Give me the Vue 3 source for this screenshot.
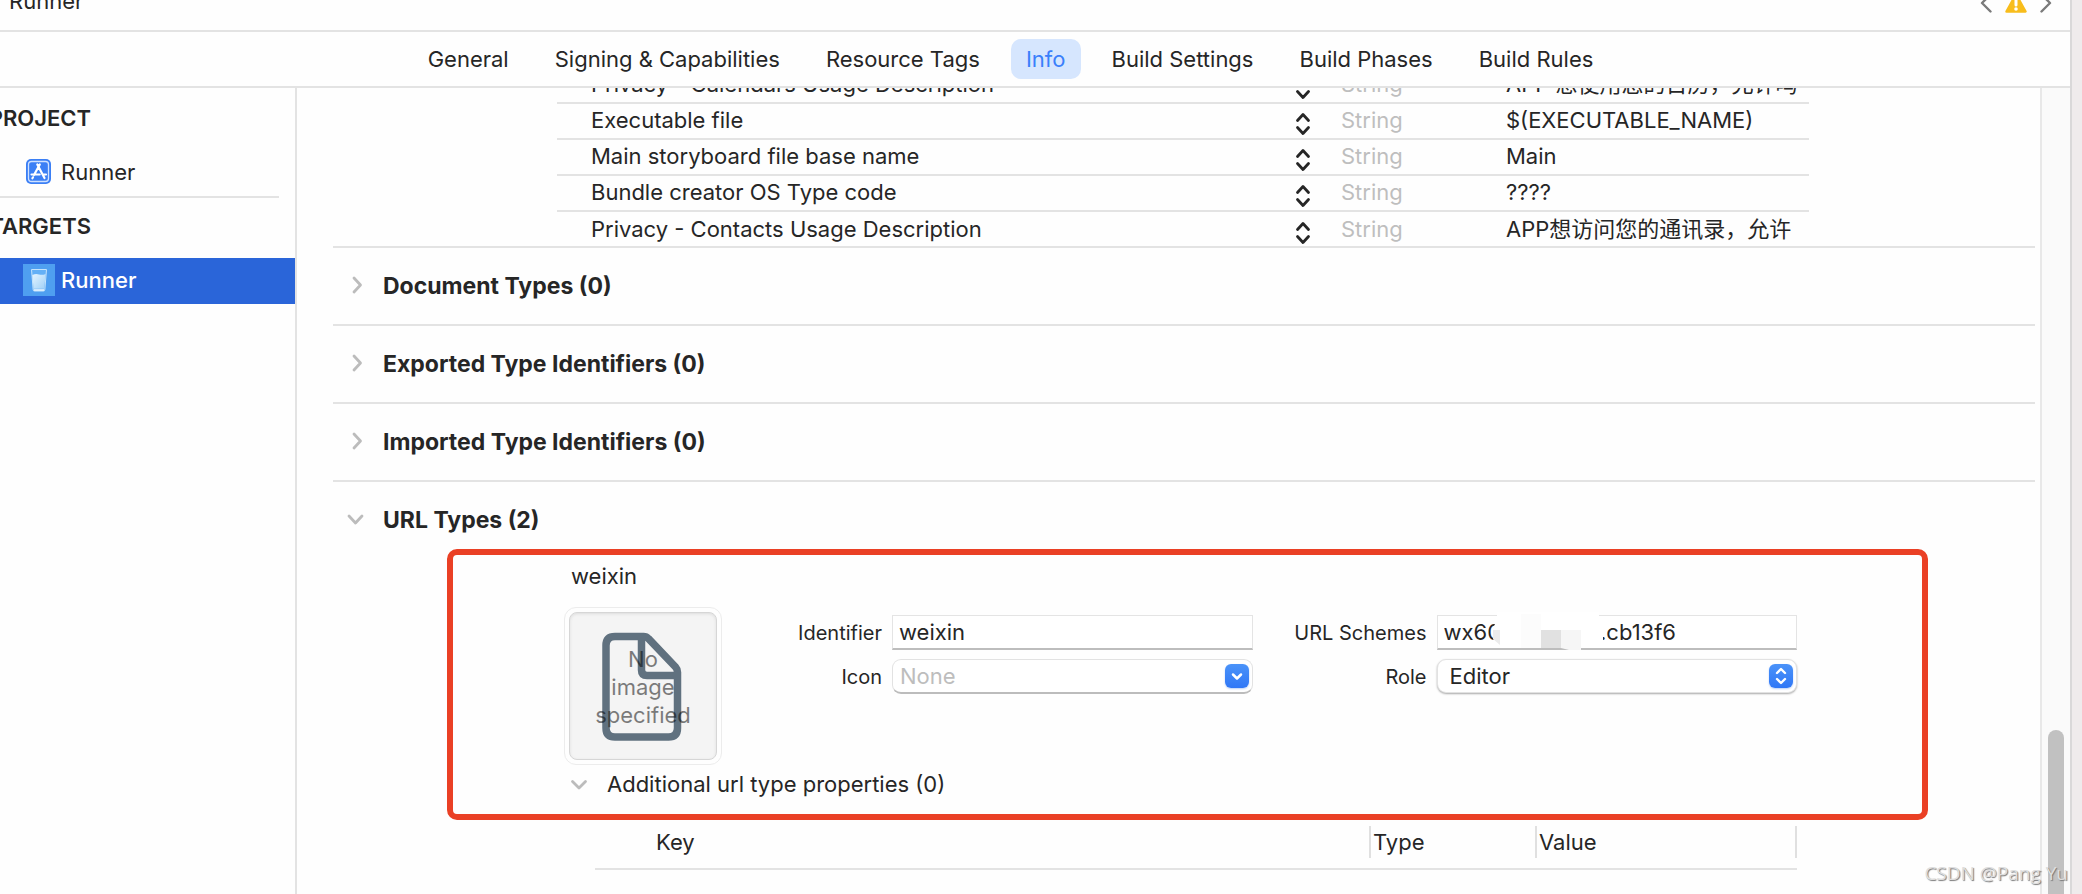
<script setup>
import { ref } from 'vue'

const tabs = ['General', 'Signing & Capabilities', 'Resource Tags', 'Info', 'Build Settings', 'Build Phases', 'Build Rules']
const activeTab = ref('Info')

const rows = [
  { key: 'Privacy - Calendars Usage Description', type: 'String', value: 'APP 想使用您的日历，允许吗' },
  { key: 'Executable file', type: 'String', value: '$(EXECUTABLE_NAME)' },
  { key: 'Main storyboard file base name', type: 'String', value: 'Main' },
  { key: 'Bundle creator OS Type code', type: 'String', value: '????' },
  { key: 'Privacy - Contacts Usage Description', type: 'String', value: 'APP想访问您的通讯录，允许' },
]

const sections = ['Document Types (0)', 'Exported Type Identifiers (0)', 'Imported Type Identifiers (0)']

const identifier = ref('weixin')
const icon = ref('')
const scheme = ref('wx60' + '\u00a0'.repeat(16) + '.cb13f6')
const role = ref('Editor')
</script>

<template>
  <div class="window">
    <div class="editor">
      <header class="jumpbar">
        <span class="crumb">Runner</span>
        <div class="issues">
          <button class="plain" aria-label="Previous issue">
            <svg width="12" height="20" viewBox="0 0 12 20"><path d="M10.500 1.500L2 10l8.500 8.500" fill="none" stroke="#7b7b7b" stroke-width="2.400" stroke-linecap="round" stroke-linejoin="round" /></svg>
          </button>
          <svg class="warning" width="22" height="20" viewBox="0 0 22 20">
            <path d="M11 1.500L20.500 18.500H1.500z" fill="#f8bd1c" stroke="#f8bd1c" stroke-width="2.500" stroke-linejoin="round" />
            <path d="M11 5v7" stroke="#fff" stroke-width="3" stroke-linecap="round" />
            <circle cx="11" cy="16" r="1.800" fill="#fff" />
          </svg>
          <button class="plain" aria-label="Next issue">
            <svg width="12" height="20" viewBox="0 0 12 20"><path d="M1.500 1.500L10 10l-8.500 8.500" fill="none" stroke="#7b7b7b" stroke-width="2.400" stroke-linecap="round" stroke-linejoin="round" /></svg>
          </button>
        </div>
      </header>

      <nav class="tabs">
        <button v-for="t in tabs" :key="t" class="tab" :class="{ active: t === activeTab }" @click="activeTab = t">{{ t }}</button>
      </nav>

      <div class="body">
        <aside class="sidebar">
          <h2 class="group">PROJECT</h2>
          <a class="item" href="#project">
            <svg class="glyph" width="32" height="32" viewBox="0 0 32 32">
              <rect x="3" y="3" width="25" height="25" rx="5" fill="#3b7ff5" />
              <rect x="5.500" y="5.500" width="20" height="20" rx="3" fill="none" stroke="#cfe1ff" stroke-width="1.300" />
              <path d="M14.300 8.500L21.500 22M16.800 8.500L11 19M8.500 18.500h8.200M19.500 18.500H23M10 21.300l-.6 1" stroke="#fff" stroke-width="2.200" stroke-linecap="round" fill="none" />
            </svg>
            Runner
          </a>
          <div class="divider"></div>
          <h2 class="group">TARGETS</h2>
          <a class="item selected" href="#target">
            <svg class="glyph" width="32" height="32" viewBox="0 0 32 32">
              <defs>
                <linearGradient id="water" x1="0" y1="0" x2="1" y2="1">
                  <stop offset="0" stop-color="#e4f4ff" /><stop offset="1" stop-color="#9fd0f7" />
                </linearGradient>
              </defs>
              <rect width="32" height="32" fill="#4f9ff0" />
              <path d="M8.500 5.500h15l-1.700 20.500q-.1 1-1.200 1h-9.200q-1.100 0-1.200-1z" fill="#64b0f6" stroke="#c5e3fb" stroke-width="1" />
              <path d="M9.300 11q3.500-1.700 6.700-.6t6.600-.4l-1.300 14.800h-10.700z" fill="url(#water)" />
              <path d="M11 26h10" stroke="#f3faff" stroke-width="1.500" />
            </svg>
            Runner
          </a>
        </aside>

        <main class="content">
          <div class="plist">
            <table>
              <colgroup><col /><col class="c-step" /><col class="c-type" /><col class="c-value" /></colgroup>
              <tbody>
                <tr v-for="r in rows" :key="r.key">
                  <td class="key">{{ r.key }}</td>
                  <td class="step">
                    <button class="plain" :aria-label="'Change ' + r.key">
                      <svg width="16" height="24" viewBox="0 0 16 24"><path d="M2.500 8.500L8 2.500l5.500 6M2.500 15.500l5.500 6 5.500-6" fill="none" stroke="#262626" stroke-width="2.800" stroke-linecap="round" stroke-linejoin="round" /></svg>
                    </button>
                  </td>
                  <td class="type">{{ r.type }}</td>
                  <td class="value">{{ r.value }}</td>
                </tr>
              </tbody>
            </table>
          </div>

          <section v-for="s in sections" :key="s" class="section">
            <button class="disclosure">
              <svg width="20" height="20" viewBox="0 0 20 20"><path d="M7 2l6.500 7-6.500 7" fill="none" stroke="#bcbcbc" stroke-width="2.800" stroke-linecap="round" stroke-linejoin="round" /></svg>
              {{ s }}
            </button>
          </section>

          <section class="section url-types">
            <button class="disclosure">
              <svg width="20" height="20" viewBox="0 0 20 20"><path d="M2 6l6.500 7 6.500-7" fill="none" stroke="#bcbcbc" stroke-width="2.800" stroke-linecap="round" stroke-linejoin="round" /></svg>
              URL Types (2)
            </button>

            <div class="highlight">
              <h3 class="name">weixin</h3>
              <div class="detail">
                <div class="well">
                  <div class="well-inner">
                    <svg class="file" width="80" height="110" viewBox="0 0 80 110">
                      <g fill="none" stroke="#60717f" stroke-width="7.500" stroke-linejoin="round">
                        <path d="M13 5.500h28.500q3 0 5 2.200l27 28.300q2 2.200 2 5.200V97q0 9-9 9H13q-9 0-9-9V14.500q0-9 9-9z" />
                        <path d="M39.500 6v33q0 5.500 5.500 5.500h31" />
                      </g>
                    </svg>
                    <p class="well-text">No<br />image<br />specified</p>
                  </div>
                </div>
                <div class="form">
                  <label for="identifier">Identifier</label>
                  <input id="identifier" v-model="identifier" class="field" type="text" />
                  <label for="schemes">URL Schemes</label>
                  <div class="wrap">
                    <input id="schemes" v-model="scheme" class="field" type="text" />
                    <svg class="mosaic" width="112" height="38" viewBox="0 0 112 38">
                      <path d="M4 0H106V8L110 18V36H4L0 26V16L4 8z" fill="#fff" />
                      <path d="M0 18h7v15L0 27z" fill="#ebebeb" />
                      <rect x="28" y="2" width="20" height="34" fill="#fcfcfc" />
                      <rect x="48" y="18" width="20" height="18" fill="#e1e1e1" />
                      <path d="M68 18h20v20h-12l-8-2z" fill="#f6f6f6" />
                    </svg>
                  </div>
                  <label for="icon">Icon</label>
                  <div class="wrap">
                    <input id="icon" v-model="icon" class="combo" type="text" placeholder="None" />
                    <button class="badge" aria-label="Choose icon">
                      <svg width="24" height="24" viewBox="0 0 24 24"><path d="M8 10.500l4 4 4-4" fill="none" stroke="#fff" stroke-width="2.500" stroke-linecap="round" stroke-linejoin="round" /></svg>
                    </button>
                  </div>
                  <label for="role">Role</label>
                  <div class="wrap">
                    <select id="role" v-model="role" class="popup">
                      <option>Editor</option>
                      <option>Viewer</option>
                      <option>None</option>
                    </select>
                    <span class="badge">
                      <svg width="24" height="24" viewBox="0 0 24 24"><path d="M8 9l4-4 4 4M8 15l4 4 4-4" fill="none" stroke="#fff" stroke-width="2.400" stroke-linecap="round" stroke-linejoin="round" /></svg>
                    </span>
                  </div>
                </div>
              </div>
              <button class="additional">
                <svg width="20" height="20" viewBox="0 0 20 20"><path d="M3.500 7.500l6.500 6.500 6.500-6.500" fill="none" stroke="#bcbcbc" stroke-width="2.800" stroke-linecap="round" stroke-linejoin="round" /></svg>
                Additional url type properties (0)
              </button>
            </div>

            <div class="props">
              <table>
                <colgroup><col /><col class="p-type" /><col class="p-value" /></colgroup>
                <thead>
                  <tr>
                    <th class="p-key"><span>Key</span></th>
                    <th><span class="ruled">Type</span></th>
                    <th><span class="ruled last">Value</span></th>
                  </tr>
                </thead>
              </table>
            </div>
          </section>
        </main>

        <div class="scrollbar"><div class="thumb"></div></div>
      </div>
    </div>
    <div class="edge"></div>
    <div class="watermark">CSDN @Pang Yu</div>
  </div>
</template>

<style>
body {
  margin: 0;
  overflow: hidden;
}
</style>

<style scoped>
.window {
  position: relative;
  display: flex;
  height: 100vh;
  overflow: hidden;
  background: #fefefe;
  color: #262626;
  font: 22px/28px Inter, "Noto Sans CJK SC", sans-serif;
}
.window * {
  box-sizing: border-box;
}
button,
input,
select {
  margin: 0;
  padding: 0;
  border: 0;
  background: none;
  color: inherit;
  font: inherit;
}
svg {
  display: block;
  flex: none;
}
h2,
h3,
p {
  margin: 0;
  font: inherit;
}
table {
  width: 100%;
  border-collapse: collapse;
  table-layout: fixed;
}
td,
th {
  padding: 0;
  text-align: left;
  font-weight: 400;
  white-space: nowrap;
}
.editor {
  flex: 1;
  min-width: 0;
  display: flex;
  flex-direction: column;
  border-right: 2px solid #d9d8d9;
}
.edge {
  width: 10px;
  background: #efebec;
}
.jumpbar {
  flex: none;
  height: 60px;
  margin-top: -28px;
  padding: 0 18px 0 9px;
  display: flex;
  align-items: center;
  justify-content: space-between;
  border-bottom: 2px solid #e3e3e3;
}
.issues {
  display: flex;
  align-items: center;
  gap: 13px;
  padding-top: 4px;
}
.tabs {
  flex: none;
  height: 56px;
  padding-right: 49px;
  display: flex;
  align-items: center;
  justify-content: center;
  gap: 16px;
  border-bottom: 2px solid #e3e3e3;
}
.tab {
  height: 40px;
  padding: 0 15px;
  border-radius: 10px;
  white-space: nowrap;
}
.tab.active {
  background: #d6e6fe;
  color: #3a7ffb;
}
.body {
  flex: 1;
  min-height: 0;
  display: flex;
}
.sidebar {
  flex: none;
  width: 297px;
  border-right: 2px solid #e3e3e3;
}
.group {
  width: 91px;
  height: 60px;
  display: flex;
  align-items: center;
  justify-content: flex-end;
  font-weight: 600;
}
.item {
  height: 48px;
  padding-left: 23px;
  display: flex;
  align-items: center;
  gap: 6px;
  color: inherit;
  text-decoration: none;
}
.item.selected {
  height: 46px;
  padding-bottom: 2px;
  background: #2a65d9;
  color: #fff;
  font-weight: 500;
}
.divider {
  width: 279px;
  height: 2px;
  background: #e3e3e3;
}
.divider + .group {
  padding-bottom: 4px;
}
.content {
  flex: 1;
  min-width: 0;
  padding: 0 5px 0 36px;
  overflow: hidden;
}
.plist {
  margin: -21px 226px -1px 224px;
}
.plist tr {
  height: 36px;
  border-bottom: 2px solid #e3e3e3;
}
.plist tr:last-child {
  border-bottom: 0;
}
.plist td {
  height: 34px;
  padding-bottom: 2px;
  line-height: 32px;
  overflow: hidden;
}
.c-step {
  width: 46px;
}
.c-type {
  width: 165px;
}
.c-value {
  width: 303px;
}
.plist .key {
  padding-left: 34px;
}
.step button {
  display: block;
  padding-top: 8px;
}
.type {
  color: #bebebe;
}
.section {
  border-top: 2px solid #e3e3e3;
}
.disclosure {
  height: 76px;
  padding-left: 14px;
  display: flex;
  align-items: center;
  gap: 16px;
  font-size: 23px;
  font-weight: 700;
}
.url-types .disclosure {
  margin-bottom: -9px;
}
.highlight {
  margin: 0 107px 0 114px;
  padding: 7px 125px 16px 111px;
  border: 6px solid #ea4025;
  border-radius: 10px;
}
.name {
  padding-left: 7px;
}
.detail {
  margin-top: 17px;
  display: flex;
}
.well {
  flex: none;
  width: 158px;
  height: 158px;
  padding: 4px;
  border: 1px solid #ececec;
  border-radius: 12px;
}
.well-inner {
  position: relative;
  height: 148px;
  border: 1px solid #d6d6d6;
  border-radius: 8px;
  background: #f4f4f4;
  box-shadow: inset 0 1px 3px #dcdcdc;
  display: flex;
  align-items: center;
  justify-content: center;
}
.file {
  margin-right: 2px;
}
.well-text {
  position: absolute;
  inset: 32px 0 auto;
  text-align: center;
  color: #000;
  opacity: 0.5;
}
.form {
  flex: 1;
  padding-top: 8px;
  display: grid;
  grid-template-columns: 170px 1fr 184px 1fr;
  grid-template-rows: 36px 35px;
  row-gap: 8px;
}
label {
  padding-right: 10px;
  font-size: 20px;
  line-height: 36px;
  text-align: right;
}
.wrap {
  position: relative;
  min-width: 0;
}
.field {
  width: 100%;
  height: 35px;
  padding: 0 6px;
  border: 1px solid #e4e4e4;
  border-bottom: 2px solid #bdbdbd;
  background: #fff;
}
.combo {
  width: 100%;
  height: 35px;
  padding: 0 40px 0 7px;
  border: 1px solid #e2e2e2;
  border-bottom: 2px solid #bcbcbc;
  border-radius: 9px;
  background: #fff;
}
.combo::placeholder {
  color: #bdbdbd;
  opacity: 1;
}
.popup {
  appearance: none;
  width: 100%;
  height: 34px;
  padding: 0 40px 0 12px;
  border: 1px solid #e2e2e2;
  border-radius: 9px;
  background: #fff;
  box-shadow: 0 1px 2px #a8a8a8;
}
.badge {
  position: absolute;
  top: 5px;
  right: 4px;
  width: 24px;
  height: 24px;
  border-radius: 6px;
  background: linear-gradient(#4b93f9, #2f77f6);
  box-shadow: 0 1px 2px #b9cff5;
}
span.badge {
  pointer-events: none;
}
.mosaic {
  position: absolute;
  top: -3px;
  left: 56px;
  pointer-events: none;
}
.additional {
  margin-top: 5px;
  padding-left: 5px;
  display: flex;
  align-items: center;
  gap: 18px;
}
.props {
  margin: 0 238px 0 262px;
}
.p-type {
  width: 166px;
}
.p-value {
  width: 262px;
}
.props th {
  padding: 6px 0 10px;
  border-bottom: 2px solid #e3e3e3;
}
.props span {
  display: block;
  height: 32px;
  line-height: 32px;
}
.p-key span {
  padding-left: 61px;
}
.ruled {
  padding-left: 2px;
  border-left: 2px solid #e0e0e0;
}
.last {
  border-right: 2px solid #e0e0e0;
}
.scrollbar {
  flex: none;
  width: 30px;
  padding: 0 6px;
  display: flex;
  flex-direction: column;
  justify-content: flex-end;
  border-left: 2px solid #e8e8e8;
  background: #fafafa;
}
.thumb {
  height: 164px;
  border-radius: 8px 8px 0 0;
  background: #c1c1c1;
}
.watermark {
  position: absolute;
  right: 14px;
  bottom: 7px;
  color: #dedede;
  font: 19px/28px "Open Sans", "Noto Sans", sans-serif;
  text-shadow: 1px 1px 1px #777;
}
</style>
